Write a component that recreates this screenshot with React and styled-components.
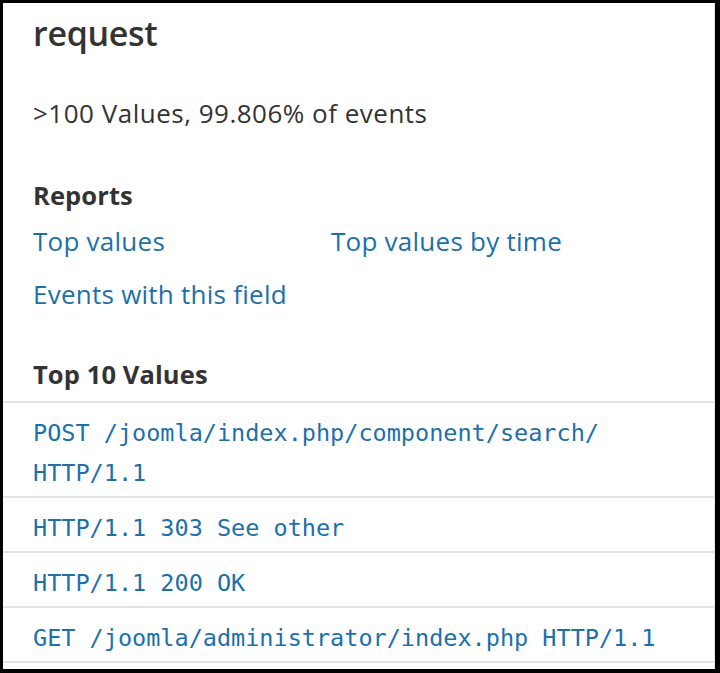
import React from 'react';
import styled, { createGlobalStyle } from 'styled-components';

const GlobalStyle = createGlobalStyle`
    html, body {
        margin: 0;
        padding: 0;
        background: #ffffff;
    }
    * {
        box-sizing: border-box;
    }
`

const Frame = styled.div`
    width: 720px;
    height: 673px;
    border-style: solid;
    border-color: #000000;
    border-width: 3px 5px 4px 3px;
    background: #ffffff;
    overflow: hidden;
`

const Panel = styled.div`
    height: 100%;
    border-right: 1px solid #e6e6e6;
    font-family: 'Open Sans', 'Liberation Sans', sans-serif;
    color: #333333;
`

const Section = styled.div`
    padding: 0 30px;
`

const Title = styled.h2`
    margin: 0;
    padding-top: 12px;
    font-size: 34px;
    line-height: 36px;
    font-weight: 600;
    letter-spacing: -0.3px;
`

const Summary = styled.p`
    margin: 0;
    padding-top: 47px;
    font-size: 26px;
    line-height: 30px;
    letter-spacing: 0.5px;
`

const Heading = styled.h3`
    margin: 0;
    padding-top: ${props => props.$gap}px;
    font-size: 25.5px;
    line-height: 30px;
    font-weight: 700;
    letter-spacing: 0.1px;
`

const Links = styled.div`
    display: grid;
    grid-template-columns: 298px 1fr;
    row-gap: 23px;
    padding-top: 16px;
`

const Link = styled.a`
    color: #1b70ad;
    font-size: 26px;
    line-height: 30px;
    letter-spacing: 0.25px;
    text-decoration: none;
    cursor: pointer;
`

const ValueList = styled.ul`
    list-style: none;
    margin: 12px 0 0;
    padding: 0;
    border-bottom: 2px solid #e3e3e3;
`

const ValueRow = styled.li`
    border-top: 2px solid #e3e3e3;
    padding: 10px 30px 3px;
    font-family: 'DejaVu Sans Mono', 'Liberation Mono', monospace;
    font-size: 23.5px;
    line-height: 40px;
    color: #1b70ad;
`

const topValues = [
    'POST /joomla/index.php/component/search/ HTTP/1.1',
    'HTTP/1.1 303 See other',
    'HTTP/1.1 200 OK',
    'GET /joomla/administrator/index.php HTTP/1.1'
]

const App = () => {
    return (
        <Frame>
            <GlobalStyle />
            <Panel>
                <Section>
                    <Title>request</Title>
                    <Summary>&gt;100 Values, 99.806% of events</Summary>
                    <Heading $gap={52}>Reports</Heading>
                    <Links>
                        <Link>Top values</Link>
                        <Link>Top values by time</Link>
                        <Link>Events with this field</Link>
                    </Links>
                    <Heading $gap={50}>Top 10 Values</Heading>
                </Section>
                <ValueList>
                    {topValues.map(value => (
                        <ValueRow key={value}>{value}</ValueRow>
                    ))}
                </ValueList>
            </Panel>
        </Frame>
    )
}

export default App;
